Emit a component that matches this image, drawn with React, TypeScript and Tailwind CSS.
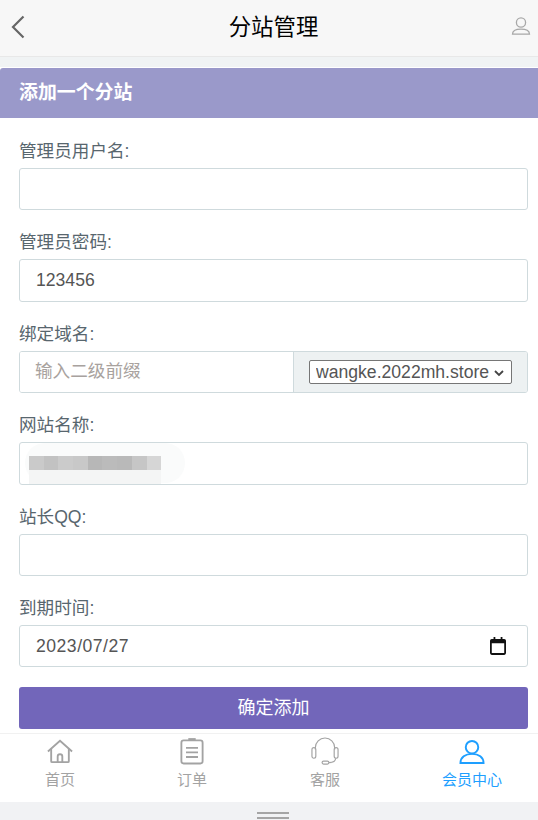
import React from "react";

const font = { fontFamily: '"Liberation Sans", "Noto Sans CJK SC", sans-serif' };

const inputCls =
  "block w-full h-[42.4px] rounded-[3px] border border-[#cfdadd] bg-white px-4 text-[17.6px] text-[#555] outline-none placeholder:text-[#a8a29e]";

function Field({ label, children }: { label: string; children: React.ReactNode }) {
  return (
    <div className="mb-[15px]">
      <div className="mb-[5px] flex h-[29px] items-end text-[17.6px] leading-[24px] text-[#58666e]">{label}</div>
      {children}
    </div>
  );
}

function Tab({ label, active, className, children }: { label: string; active?: boolean; className: string; children: React.ReactNode }) {
  return (
    <div className={`flex flex-col items-center ${className} ${active ? "text-[#1e9fff]" : "text-[#a3a3a3]"}`}>
      <div className="flex h-[32px] w-[32px] items-center justify-center">{children}</div>
      <div className="mt-[3px] text-[15px] leading-[20px]">{label}</div>
    </div>
  );
}

export default function App() {
  return (
    <div style={font} className="flex h-[820px] w-[538px] flex-col overflow-hidden bg-[#f0f3f4]">
      <header className="relative flex h-[57px] shrink-0 items-center justify-center border-b border-[#e8e8e8] bg-[#f7f7f7] pl-[9px]">
        <svg className="absolute left-[10px] top-[15px]" width="16" height="24" viewBox="0 0 16 24" fill="none" stroke="#666" strokeWidth="2.2">
          <path d="M13.5 1.5 3 12l10.5 10.5" />
        </svg>
        <span className="text-[22.4px] leading-[30px] text-black">分站管理</span>
        <svg className="absolute left-[511px] top-[16px]" width="20" height="20" viewBox="0 0 20 20" fill="none" stroke="#a8a8a8" strokeWidth="1.3">
          <circle cx="10" cy="6.5" r="4.6" />
          <path d="M1.5 18.2c0-3.6 3.2-5 8.5-5s8.5 1.4 8.5 5z" />
        </svg>
      </header>

      <div className="mt-[10px] min-h-0 flex-1 border-t border-white bg-white">
        <div className="flex h-[50px] items-center rounded-tl-[3px] bg-[#9a99ca] pl-[19px] text-[18.9px] font-bold text-white">
          添加一个分站
        </div>
        <div className="pl-[19px] pr-[10px] pt-[16px]">
          <Field label="管理员用户名:">
            <input className={inputCls} />
          </Field>
          <Field label="管理员密码:">
            <input className={inputCls} defaultValue="123456" />
          </Field>
          <Field label="绑定域名:">
            <div className="flex h-[42.4px] overflow-hidden rounded-[3px] border border-[#cfdadd]">
              <input className="h-full w-[273px] bg-white px-[15px] text-[17.6px] text-[#555] outline-none placeholder:text-[#a8a29e]" placeholder="输入二级前缀" />
              <div className="flex flex-1 items-center border-l border-[#cfdadd] bg-[#edf1f2] pl-[15px]">
                <div className="relative">
                  <select className="block h-[24px] w-[203px] appearance-none rounded-[2px] border border-[#767676] bg-white pl-[6px] text-[17.6px] leading-[22px] text-[#555]">
                    <option>wangke.2022mh.store</option>
                  </select>
                  <svg className="pointer-events-none absolute left-[185px] top-[10px]" width="10" height="7" viewBox="0 0 10 7" fill="none" stroke="#444" strokeWidth="1.8">
                    <path d="M1 1l4 4 4-4" />
                  </svg>
                </div>
              </div>
            </div>
          </Field>
          <Field label="网站名称:">
            <div className="relative">
              <input className={inputCls} />
              <div className="absolute left-[6px] top-[1px] h-[40px] w-[160px] rounded-[20px] bg-[#fafbfb]" />
              <div className="absolute left-[10px] top-[14px] flex">
                {["#cacaca", "#c2c2c2", "#cbcbcb", "#c8c8c8", "#b7b7b7", "#bbbbbb", "#b9b9b9", "#c6c6c6", "#d6d6d6"].map((c) => (
                  <div key={c} className="h-[14px] w-[14.7px]" style={{ backgroundColor: c }} />
                ))}
              </div>
              <div className="absolute left-[10px] top-[28px] h-[14px] w-[132px] bg-[#f4f5f5]" />
            </div>
          </Field>
          <Field label="站长QQ:">
            <input className={inputCls} />
          </Field>
          <Field label="到期时间:">
            <div className="relative">
              <input className={`${inputCls} tracking-[0.5px]`} defaultValue="2023/07/27" />
              <svg className="absolute left-[471px] top-[12px]" width="16" height="18" viewBox="0 0 18 20" fill="#111">
                <path d="M4 0h2v2h6V0h2v2h2a2 2 0 0 1 2 2v14a2 2 0 0 1-2 2H2a2 2 0 0 1-2-2V4a2 2 0 0 1 2-2h2zM2 7v11h14V7z" />
              </svg>
            </div>
          </Field>
          <button className="mt-[5px] h-[42px] w-full rounded-[3px] bg-[#7266ba] text-[18px] text-white">确定添加</button>
        </div>
      </div>

      <nav className="flex h-[69px] shrink-0 items-start border-t border-[#f1f1f1] bg-white pt-[1px]">
        <Tab label="首页" className="w-[120px]">
          <svg width="26" height="25" viewBox="0 0 28 26" fill="none" stroke="currentColor" strokeWidth="2">
            <path d="M1 13 14 1.5 27 13" />
            <path d="M4.5 10v13.5a1 1 0 0 0 1 1h17a1 1 0 0 0 1-1V10" />
            <path d="M11.5 24.5v-6a2.5 2.5 0 0 1 5 0v6" />
          </svg>
        </Tab>
        <Tab label="订单" className="w-[144px]">
          <svg width="24" height="27" viewBox="0 0 26 28" fill="none" stroke="currentColor" strokeWidth="2">
            <rect x="1.5" y="2" width="23" height="25" rx="2.5" />
            <path d="M9 1h8" strokeWidth="3" />
            <path d="M6.5 10h13M6.5 15h13M6.5 20h13" />
          </svg>
        </Tab>
        <Tab label="客服" className="w-[122px]">
          <svg width="30" height="29" viewBox="0 0 30 30" fill="none" stroke="currentColor" strokeWidth="1.2">
            <path d="M5 13V11a10 10 0 0 1 20 0v2" />
            <rect x="1.5" y="11" width="4" height="11" rx="2" />
            <rect x="24.5" y="11" width="4" height="11" rx="2" />
            <path d="M26 22c0 3.500-3 4.500-7 4.500" />
            <rect x="12" y="25" width="7" height="3" rx="1.500" />
          </svg>
        </Tab>
        <Tab label="会员中心" active className="ml-[20px] w-[132px]">
          <svg width="26" height="25" viewBox="0 0 26 26" fill="none" stroke="currentColor" strokeWidth="2">
            <circle cx="13" cy="8.5" r="6.5" />
            <path d="M1 25c0-6 5-9.5 12-9.5S25 19 25 25z" />
          </svg>
        </Tab>
      </nav>
      <div className="relative h-[18px] shrink-0 bg-[#f1f2f4]">
        <div className="absolute left-[257px] top-[10px] h-[2px] w-[32px] bg-[#a5a5a5]" />
        <div className="absolute left-[257px] top-[15px] h-[2px] w-[32px] bg-[#a5a5a5]" />
      </div>
    </div>
  );
}
